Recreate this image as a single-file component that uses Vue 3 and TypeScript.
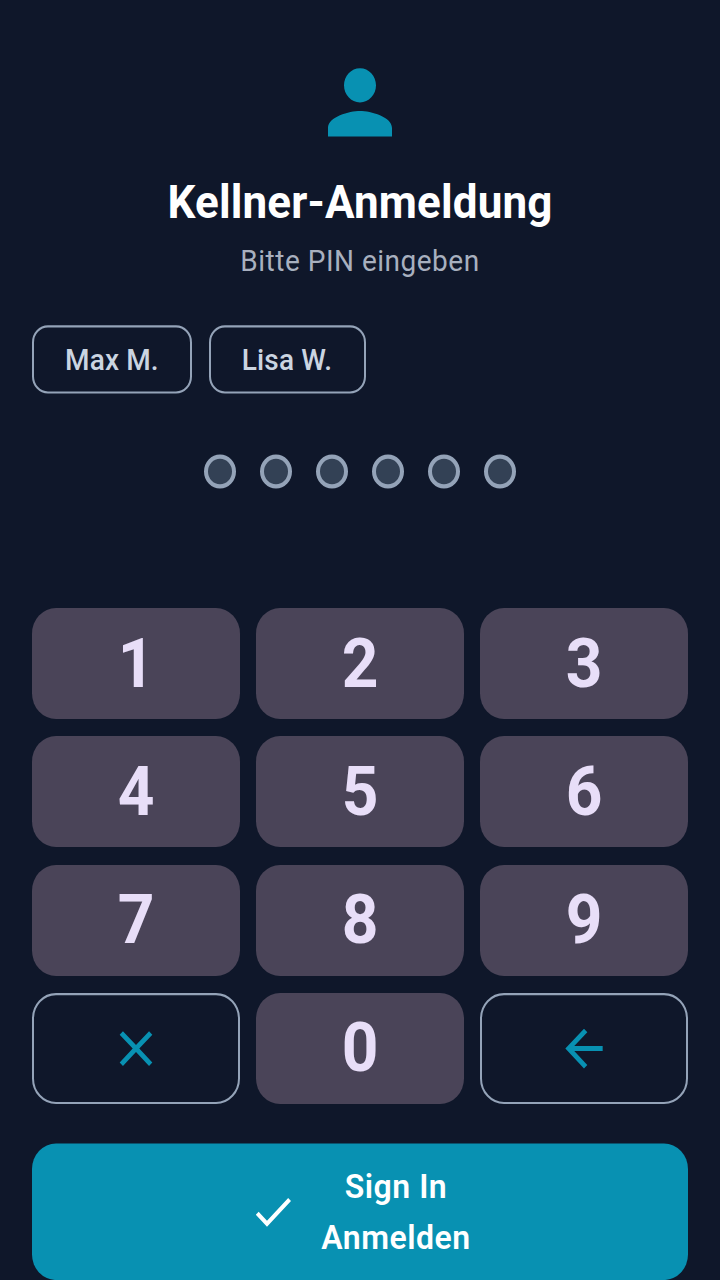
<script setup lang="ts">
const waiters = ['Max M.', 'Lisa W.']
const dots = [1, 2, 3, 4, 5, 6]
const digits = ['1', '2', '3', '4', '5', '6', '7', '8', '9']
</script>

<template>
  <div class="screen">
    <svg class="person" viewBox="0 0 24 24">
      <path d="M12 12c2.21 0 4-1.79 4-4s-1.79-4-4-4-4 1.79-4 4 1.79 4 4 4zm0 2c-2.67 0-8 1.34-8 4v2h16v-2c0-2.66-5.33-4-8-4z" />
    </svg>
    <h1 class="title">Kellner-Anmeldung</h1>
    <p class="subtitle">Bitte PIN eingeben</p>

    <div class="chips">
      <button v-for="name in waiters" :key="name" class="chip">{{ name }}</button>
    </div>

    <div class="dots">
      <span v-for="dot in dots" :key="dot" class="dot"></span>
    </div>

    <div class="keypad">
      <button v-for="digit in digits" :key="digit" class="key">{{ digit }}</button>
      <button class="key outline" aria-label="Abbrechen">
        <svg class="key-icon" viewBox="0 0 24 24">
          <path d="M19 6.41L17.59 5 12 10.59 6.41 5 5 6.41 10.59 12 5 17.59 6.41 19 12 13.41 17.59 19 19 17.59 13.41 12z" />
        </svg>
      </button>
      <button class="key">0</button>
      <button class="key outline" aria-label="Löschen">
        <svg class="key-icon" viewBox="0 0 24 24">
          <path d="M20 11H7.83l5.59-5.59L12 4l-8 8 8 8 1.41-1.41L7.83 13H20v-2z" />
        </svg>
      </button>
    </div>

    <button class="submit">
      <svg class="check" viewBox="0 0 24 24">
        <path d="M9 16.17L4.83 12l-1.42 1.41L9 19 21 7l-1.41-1.41z" />
      </svg>
      <span class="submit-text">Sign In<br />Anmelden</span>
    </button>
  </div>
</template>

<style scoped>
.screen {
  box-sizing: border-box;
  width: 720px;
  height: 1200px;
  padding: 48px 32px 0;
  display: flex;
  flex-direction: column;
  align-items: center;
  background: #0f172a;
  font-family: Roboto, "Liberation Sans", sans-serif;
  transform: scaleY(1.0667);
  transform-origin: top left;
}

button {
  font-family: inherit;
  padding: 0;
  margin: 0;
}

.person {
  width: 96px;
  height: 96px;
  flex: none;
  fill: #0891b2;
}

.title {
  margin: 19px 0 0;
  font-size: 44px;
  line-height: 52px;
  font-weight: 700;
  letter-spacing: 0.15px;
  color: #ffffff;
}

.subtitle {
  margin: 10px 0 0;
  font-size: 28px;
  line-height: 40px;
  letter-spacing: 0.5px;
  color: #a8b0bf;
}

.chips {
  align-self: stretch;
  display: flex;
  gap: 16.5px;
  margin-top: 40px;
}

.chip {
  box-sizing: border-box;
  height: 64px;
  padding: 0 31.5px 0 31px;
  border: 2px solid #94a3b8;
  border-radius: 16px;
  background: transparent;
  color: #cbd5e1;
  font-size: 28px;
  font-weight: 500;
  letter-spacing: 0.15px;
}

.dots {
  display: flex;
  gap: 24px;
  margin-top: 57px;
}

.dot {
  box-sizing: border-box;
  width: 32px;
  height: 32px;
  border: 4px solid #94a3b8;
  border-radius: 50%;
  background: #334155;
}

.keypad {
  align-self: stretch;
  display: grid;
  grid-template-columns: repeat(3, 1fr);
  grid-auto-rows: 104px;
  gap: 16.3px 16px;
  margin-top: 112px;
}

.key {
  display: flex;
  align-items: center;
  justify-content: center;
  border: none;
  border-radius: 24px;
  background: #4a4458;
  color: #e8def8;
  font-size: 64px;
  font-weight: 700;
}

.outline {
  box-sizing: border-box;
  border: 2px solid #94a3b8;
  background: transparent;
}

.key-icon {
  width: 56px;
  height: 56px;
  fill: #0891b2;
}

.submit {
  align-self: stretch;
  flex: none;
  height: 128px;
  margin-top: 37px;
  display: flex;
  align-items: center;
  justify-content: center;
  gap: 24px;
  border: none;
  border-radius: 24px;
  background: #0891b2;
  color: #ffffff;
}

.check {
  width: 48px;
  height: 48px;
  fill: #ffffff;
}

.submit-text {
  font-size: 32px;
  line-height: 48px;
  font-weight: 600;
  letter-spacing: 0.5px;
  text-align: center;
}
</style>

<style>
html,
body {
  margin: 0;
  height: 1280px;
  background: #0f172a;
  overflow: hidden;
}
</style>
